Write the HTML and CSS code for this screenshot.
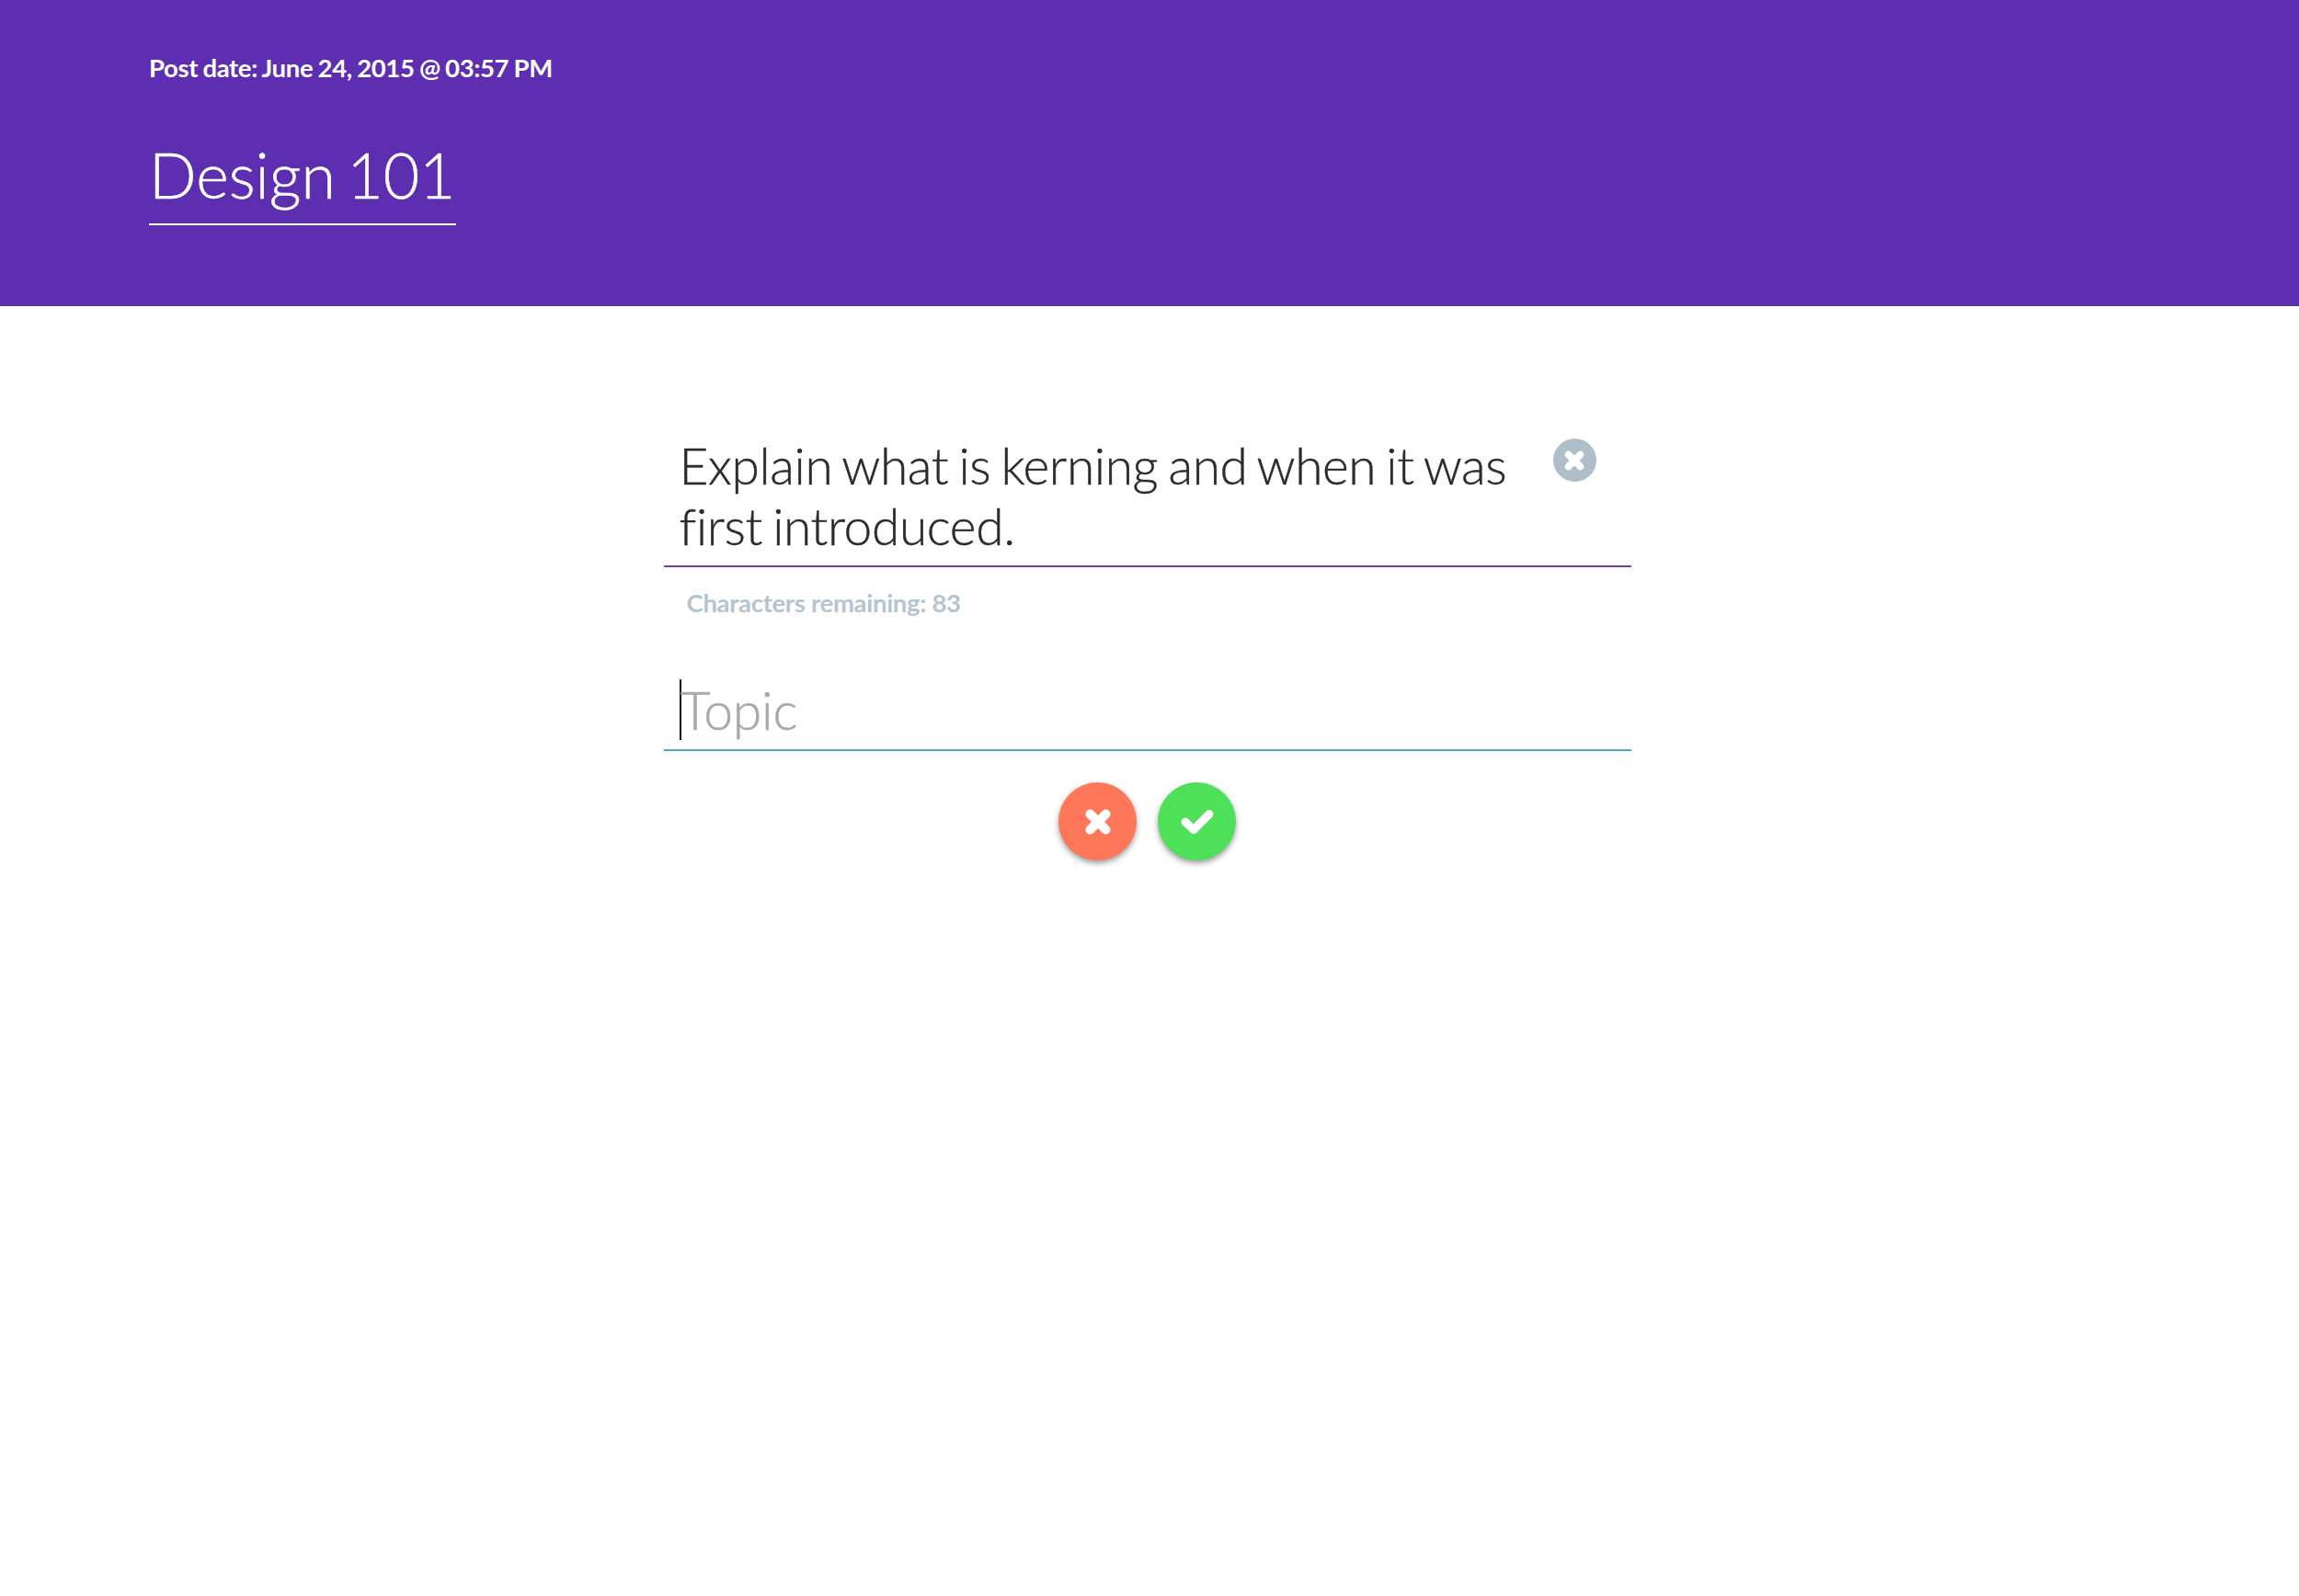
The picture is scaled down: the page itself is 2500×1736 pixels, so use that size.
FILE: index.html
```html
<!DOCTYPE html>
<html lang="en">
<head>
    <meta charset="UTF-8">
    <title>Design 101</title>
    <link rel="stylesheet" href="styles.css">
</head>
<body>
    <div class="header">
        <p class="post-date">Post date: June 24, 2015 @ 03:57 PM</p>
        <h1 class="title">Design 101</h1>
    </div>
    <div class="content">
        <form class="card-form">
            <div class="question">
                <p class="question-text">Explain what is kerning and when it was first introduced.</p>
                <button type="button" class="clear-button" aria-label="Clear">
                    <svg viewBox="0 0 24 24" width="24" height="24"><path d="M5.5 5.5 18.5 18.5M18.5 5.5 5.5 18.5" fill="none" stroke="#fff" stroke-width="7.5" stroke-linecap="round"/></svg>
                </button>
            </div>
            <p class="remaining">Characters remaining: 83</p>
            <div class="topic">
                <span class="caret"></span><span class="placeholder">Topic</span>
            </div>
            <div class="actions">
                <button type="button" class="round-button cancel" aria-label="Cancel">
                    <svg viewBox="0 0 28 28" width="28" height="28"><path d="M5.5 5.5 22.5 22.5M22.5 5.5 5.5 22.5" fill="none" stroke="#fff" stroke-width="10" stroke-linecap="round"/></svg>
                </button>
                <button type="button" class="round-button confirm" aria-label="Save">
                    <svg viewBox="0 0 36 28" width="36" height="28"><path d="M5 14 14 22.5 31 5.5" fill="none" stroke="#fff" stroke-width="9" stroke-linecap="round" stroke-linejoin="round"/></svg>
                </button>
            </div>
        </form>
    </div>
</body>
</html>
```

FILE: styles.css
```css
body {
    font-family: Lato, "Open Sans", sans-serif;
    font-variant-ligatures: none;
    min-height: 100vh;
    margin: 0;
    padding: 0;
    background-color: #fff;
    color: #333;
}
.header {
    height: 333px;
    box-sizing: border-box;
    padding: 58px 0 0 162px;
    background: #5E2EB1;
    color: #fff;
}
.post-date {
    margin: 0;
    font-size: 27.5px;
    line-height: 32px;
    font-weight: 700;
    letter-spacing: -0.35px;
    word-spacing: -1px;
}
.title {
    display: table;
    margin: 58px 0 0;
    padding-bottom: 11px;
    font-size: 68px;
    line-height: 84px;
    font-weight: 300;
    word-spacing: -6px;
    -webkit-text-stroke: 0.5px #fff;
    border-bottom: 2px solid #fff;
}
.content {
    display: flex;
    justify-content: center;
    padding-right: 5px;
}
.card-form {
    width: 1052px;
    margin-top: 140px;
}
.question {
    display: flex;
    align-items: flex-start;
    justify-content: space-between;
    padding: 0 38px 10px 17px;
    border-bottom: 2px solid #6A45A8;
}
.question-text {
    width: 910px;
    margin: 0;
    font-size: 55px;
    line-height: 66px;
    font-weight: 300;
    letter-spacing: -0.35px;
    word-spacing: -3.5px;
    -webkit-text-stroke: 0.4px #2b2b2b;
    color: #2b2b2b;
}
.clear-button {
    display: flex;
    align-items: center;
    justify-content: center;
    width: 47px;
    height: 47px;
    margin-top: 4px;
    padding: 0;
    border: 0;
    border-radius: 50%;
    background: #AEBFC9;
}
.remaining {
    margin: 23px 0 0 25px;
    font-size: 27.5px;
    line-height: 32px;
    font-weight: 700;
    letter-spacing: -0.3px;
    color: #B6C4CE;
}
.topic {
    display: flex;
    align-items: center;
    height: 87px;
    margin-top: 56px;
    padding-left: 17px;
    border-bottom: 2px solid #4FA8BE;
}
.caret {
    width: 2px;
    height: 66px;
    margin-right: -1px;
    background: #111;
}
.placeholder {
    font-size: 57px;
    font-weight: 300;
    letter-spacing: -0.2px;
    -webkit-text-stroke: 0.5px #A9A9A9;
    color: #A9A9A9;
}
.actions {
    display: flex;
    justify-content: center;
    gap: 23px;
    margin-top: 34px;
}
.round-button {
    display: flex;
    align-items: center;
    justify-content: center;
    width: 85px;
    height: 85px;
    padding: 0;
    border: 0;
    border-radius: 50%;
    box-shadow: 0 3px 6px rgba(0, 0, 0, 0.4);
}
.cancel {
    background: #FF7759;
}
.confirm {
    background: #4FE05A;
}
```
